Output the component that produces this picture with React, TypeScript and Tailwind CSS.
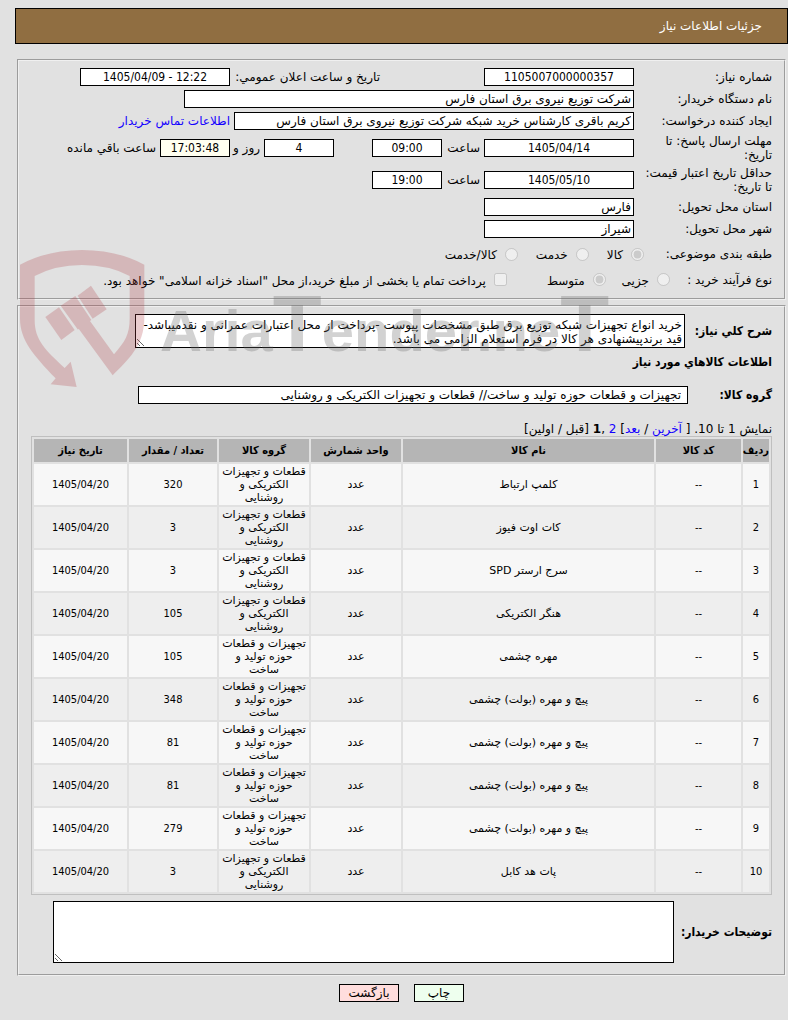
import { useId } from 'react'
import type { ReactNode } from 'react'
import clsx from 'clsx'

interface Item {
  name: string
  group: string
  qty: string
}

const ELECTRIC = 'قطعات و تجهیزات الکتریکی و روشنایی'
const MACHINERY = 'تجهیزات و قطعات حوزه تولید و ساخت'
const DUE_DATE = '1405/04/20'

const items: Item[] = [
  { name: 'کلمپ ارتباط', group: ELECTRIC, qty: '320' },
  { name: 'کات اوت فیوز', group: ELECTRIC, qty: '3' },
  { name: 'سرج ارستر SPD', group: ELECTRIC, qty: '3' },
  { name: 'هنگر الکتریکی', group: ELECTRIC, qty: '105' },
  { name: 'مهره چشمی', group: MACHINERY, qty: '105' },
  { name: 'پیچ و مهره (بولت) چشمی', group: MACHINERY, qty: '348' },
  { name: 'پیچ و مهره (بولت) چشمی', group: MACHINERY, qty: '81' },
  { name: 'پیچ و مهره (بولت) چشمی', group: MACHINERY, qty: '81' },
  { name: 'پیچ و مهره (بولت) چشمی', group: MACHINERY, qty: '279' },
  { name: 'پات هد کابل', group: ELECTRIC, qty: '3' },
]

// numbers and bold headings use the condensed cut
const condensed = "font-['DejaVu_Sans_Condensed','DejaVu_Sans',sans-serif]"
const bold = clsx(condensed, 'font-bold')
const panel = 'mr-0.5 ml-[17px] min-w-0 border-2 border-[#f0f0f0] px-3 [border-style:groove]'
const link = 'text-[#1400ff]'
const head = clsx(bold, 'bg-[#b5b5b5] p-0')
const numeric = clsx(condensed, 'p-0')

interface BoxProps {
  value: string
  className: string
  id?: string
  label?: string
  center?: boolean
}

function Box({ value, className, id, label, center }: BoxProps) {
  return (
    <input
      id={id}
      aria-label={label}
      readOnly
      defaultValue={value}
      dir={center ? 'ltr' : 'rtl'}
      className={clsx(
        'h-[18px] border border-black px-0.5 leading-4',
        center && condensed,
        center && 'text-center',
        className,
      )}
    />
  )
}

interface RowProps {
  label: string
  htmlFor?: string
  className?: string
  children: ReactNode
}

function Row({ label, htmlFor, className, children }: RowProps) {
  return (
    <div className={clsx('flex items-center', className ?? 'min-h-[22px]')}>
      <label htmlFor={htmlFor} className="w-[138px] shrink-0 pl-2">
        {label}
      </label>
      {children}
    </div>
  )
}

interface ChoiceProps {
  type: 'radio' | 'checkbox'
  name: string
  label: string
  checked?: boolean
}

function Choice({ type, name, label, checked }: ChoiceProps) {
  const id = useId()
  return (
    <span className="flex items-center gap-2">
      <input id={id} type={type} name={name} defaultChecked={checked} disabled className="m-0 size-[13px]" />
      <label htmlFor={id} className="whitespace-nowrap pt-0.5">
        {label}
      </label>
    </span>
  )
}

function Watermark() {
  return (
    <div dir="ltr" aria-hidden="true" className="pointer-events-none absolute top-[240px] left-[10px] z-10">
      <svg width="620" height="150" viewBox="0 0 620 150">
        <g transform="scale(0.3333)" fill="#b13d45" opacity="0.25">
          <path d="M30 74Q112 30 216 30Q322 30 403 74V235C403 318 352 362 308 406L206 266L204 269L152 197L196 168L244 240L240 243L312 343C345 305 359 285 359 235V108Q298 75 216 75Q136 75 74 108V240C74 300 106 330 164 384L182 365L200 441L122 433L137 415C70 345 30 300 30 235Z" />
          <path d="M203 167L243 137L290 208L248 236Z" />
          <path d="M106 231L147 202L194 270L154 300Z" />
        </g>
        <text
          x="150"
          y="111"
          fill="#6c6c6c"
          opacity="0.3"
          className="font-['Liberation_Sans',sans-serif] text-[58px] font-bold"
        >
          Aria<tspan className="text-[80px]">T</tspan>ender.ne<tspan className="text-[80px]">T</tspan>
        </text>
      </svg>
    </div>
  )
}

export default function App() {
  return (
    <div
      dir="rtl"
      className="relative min-h-screen bg-[#e1e1e1] pt-2 pb-4 font-['DejaVu_Sans',sans-serif] text-xs leading-[14px] text-black [&_input]:bg-white [&_textarea]:bg-white"
    >
      <header className="ml-[15px] flex h-9 items-center border border-black bg-[#906e41] pr-[25px] text-white">
        <h1>جزئیات اطلاعات نیاز</h1>
      </header>

      <section className={clsx(panel, 'mt-[15px] pt-[5px] pb-[7px]')}>
        <Row label="شماره نیاز:" htmlFor="need-no">
          <Box id="need-no" value="1105007000000357" center className="w-[150px]" />
          <label htmlFor="announce" className="mr-[104px] w-[150px] whitespace-nowrap">
            تاریخ و ساعت اعلان عمومي:
          </label>
          <Box id="announce" value="1405/04/09 - 12:22" center className="w-[150px]" />
        </Row>
        <Row label="نام دستگاه خریدار:" htmlFor="org">
          <Box id="org" value="شرکت توزیع نیروی برق استان فارس" className="w-[450px]" />
        </Row>
        <Row label="ایجاد کننده درخواست:" htmlFor="creator">
          <Box id="creator" value="کریم باقری کارشناس خرید شبکه شرکت توزیع نیروی برق استان فارس" className="w-[400px]" />
          <a href="#contact" className={clsx('mr-1 whitespace-nowrap', link)}>
            اطلاعات تماس خریدار
          </a>
        </Row>
        <Row label="مهلت ارسال پاسخ: تا تاریخ:" htmlFor="reply-date" className="min-h-8">
          <Box id="reply-date" value="1405/04/14" center className="w-[150px]" />
          <label htmlFor="reply-time" className="w-[42px] pr-1">ساعت</label>
          <Box id="reply-time" value="09:00" center className="w-[70px]" />
          <Box label="روز باقی مانده" value="4" center className="mr-[38px] w-[70px]" />
          <span className="w-[34px] pr-1 whitespace-nowrap">روز و</span>
          <Box label="ساعت باقی مانده" value="17:03:48" center className="w-[70px] bg-[#fffff0]!" />
          <span className="pr-1 whitespace-nowrap">ساعت باقي مانده</span>
        </Row>
        <Row label="حداقل تاریخ اعتبار قیمت: تا تاریخ:" htmlFor="valid-date" className="min-h-8">
          <Box id="valid-date" value="1405/05/10" center className="w-[150px]" />
          <label htmlFor="valid-time" className="w-[42px] pr-1">ساعت</label>
          <Box id="valid-time" value="19:00" center className="w-[70px]" />
        </Row>
        <Row label="استان محل تحویل:" htmlFor="province">
          <Box id="province" value="فارس" className="w-[150px]" />
        </Row>
        <Row label="شهر محل تحویل:" htmlFor="city">
          <Box id="city" value="شیراز" className="w-[150px]" />
        </Row>
        <div className="flex h-7 items-center">
          <span className="w-32">طبقه بندی موضوعی:</span>
          <div className="flex gap-[18px]">
            <Choice type="radio" name="subject" label="کالا" checked />
            <Choice type="radio" name="subject" label="خدمت" />
            <Choice type="radio" name="subject" label="کالا/خدمت" />
          </div>
        </div>
        <div className="flex h-[23px] items-center">
          <span className="w-[102px]">نوع فرآیند خرید :</span>
          <div className="flex gap-4">
            <Choice type="radio" name="process" label="جزیی" />
            <Choice type="radio" name="process" label="متوسط" checked />
          </div>
          <div className="mr-10">
            <Choice
              type="checkbox"
              name="treasury"
              label={'پرداخت تمام یا بخشی از مبلغ خرید،از محل "اسناد خزانه اسلامی" خواهد بود.'}
            />
          </div>
        </div>
      </section>

      <section className={clsx(panel, 'mt-[5px] pt-[7px] pb-[11px]')}>
        <div className="flex items-center">
          <label htmlFor="summary" className={clsx(bold, 'w-[87px] shrink-0 whitespace-nowrap')}>
            شرح کلي نیاز:
          </label>
          <textarea
            id="summary"
            readOnly
            className="block h-[34px] w-[550px] resize overflow-hidden border border-black px-0.5 py-[3px]"
            defaultValue={
              'خرید انواع تجهیزات شبکه توزیع برق طبق مشخصات پیوست -پرداخت از محل اعتبارات عمرانی و نقدمیباشد-\nقید برندپیشنهادی هر کالا در فرم استعلام الزامی می باشد.'
            }
          />
        </div>
        <h2 className={clsx(bold, 'mt-[7px]')}>اطلاعات کالاهاي مورد نیاز</h2>
        <div className="mt-[17px] flex items-center">
          <label htmlFor="group" className={clsx(bold, 'w-[84px] shrink-0')}>
            گروه کالا:
          </label>
          <Box
            id="group"
            value="تجهیزات و قطعات حوزه تولید و ساخت// قطعات و تجهیزات الکتریکی و روشنایی"
            className="w-[550px] pr-[6px]"
          />
        </div>
        <p className="mt-[18px]">
          نمایش 1 تا 10. [ <a href="#last" className={link}>آخرین</a> / <a href="#next" className={link}>بعد</a>]{' '}
          <a href="#page-2" className={link}>2</a> ,<b>1</b> [قبل / اولین]
        </p>

        <table className="w-full table-fixed border-separate border-spacing-0.5 border border-[#bfbfbf] text-center text-[11px] leading-[13px]">
          <colgroup>
            <col className="w-[26px]" />
            <col className="w-[85px]" />
            <col />
            <col className="w-[90px]" />
            <col className="w-[90px]" />
            <col className="w-[88px]" />
            <col className="w-[93px]" />
          </colgroup>
          <thead>
            <tr className="h-[23px]">
              <th className={head}>ردیف</th>
              <th className={head}>کد کالا</th>
              <th className={head}>نام کالا</th>
              <th className={head}>واحد شمارش</th>
              <th className={head}>گروه کالا</th>
              <th className={head}>تعداد / مقدار</th>
              <th className={head}>تاریخ نیاز</th>
            </tr>
          </thead>
          <tbody>
            {items.map((item, i) => (
              <tr key={i} className="h-[41px] odd:[&>td]:bg-[#f7f7f7] even:[&>td]:bg-[#eeeeee]">
                <td className={numeric}>{i + 1}</td>
                <td className={numeric}>--</td>
                <td className="p-0">{item.name}</td>
                <td className="p-0">عدد</td>
                <td className="px-0.5 py-0">{item.group}</td>
                <td className={numeric}>{item.qty}</td>
                <td className={numeric}>{DUE_DATE}</td>
              </tr>
            ))}
          </tbody>
        </table>

        <div className="mt-1.5 flex items-center">
          <label htmlFor="notes" className={clsx(bold, 'w-[98px] shrink-0 whitespace-nowrap')}>
            توضیحات خریدار:
          </label>
          <textarea id="notes" readOnly className="ml-[22px] block h-[62px] flex-1 resize border border-black" />
        </div>
      </section>

      {/* actions */}
      <div className="mt-2 flex justify-center gap-[15px] pl-[15px]">
        <button className="h-[18px] w-[50px] border border-black bg-[#eeffee]">چاپ</button>
        <button className="h-[18px] w-[60px] border border-black bg-[#ffdddd]">بازگشت</button>
      </div>

      <Watermark />
    </div>
  )
}
